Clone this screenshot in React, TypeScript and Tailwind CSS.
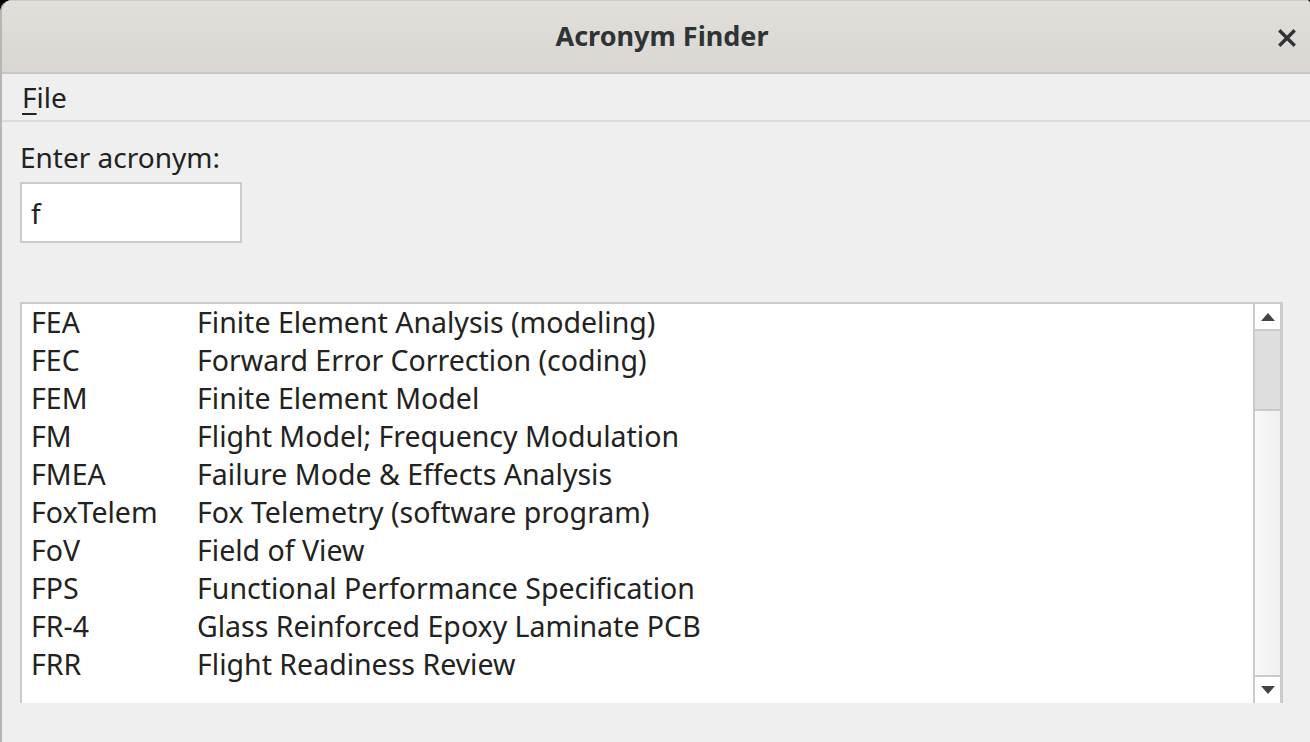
import React from 'react';

const rows: [string, string][] = [
  ['FEA', 'Finite Element Analysis (modeling)'],
  ['FEC', 'Forward Error Correction (coding)'],
  ['FEM', 'Finite Element Model'],
  ['FM', 'Flight Model; Frequency Modulation'],
  ['FMEA', 'Failure Mode & Effects Analysis'],
  ['FoxTelem', 'Fox Telemetry (software program)'],
  ['FoV', 'Field of View'],
  ['FPS', 'Functional Performance Specification'],
  ['FR-4', 'Glass Reinforced Epoxy Laminate PCB'],
  ['FRR', 'Flight Readiness Review'],
];

export default function App() {
  return (
    <div
      className="w-[1310px] h-[742px] bg-black overflow-hidden"
      style={{ fontFamily: '"Noto Sans", "Open Sans", sans-serif' }}
    >
      <div className="h-full flex flex-col rounded-tl-[12px] rounded-tr-[4px] overflow-hidden bg-[#efefef] border-l-2 border-[#b8b6b3]">
        {/* title bar */}
        <div className="relative h-[74px] shrink-0 flex items-center justify-center pl-[12px] bg-gradient-to-b from-[#e2dfdb] to-[#dad6d2] border-t border-[#cfccc8] border-b-2 border-b-[#c9c5c0]">
          <span className="text-[27px] font-bold text-[#2e3436] -mt-[1px]">Acronym Finder</span>
          <svg className="absolute right-[14px] top-[28px]" width="18" height="18" viewBox="0 0 18 18">
            <path d="M2.5 2.5 L15.5 15.5 M15.5 2.5 L2.5 15.5" stroke="#2e3436" strokeWidth="3.4" strokeLinecap="square" />
          </svg>
        </div>

        {/* menu bar */}
        <div className="h-[48px] shrink-0 flex items-center px-[20px] border-b-2 border-[#dcdcdc]">
          <span className="text-[28px] text-[#222] leading-none -mt-[1px]">
            <span className="underline underline-offset-[5px] decoration-[2px]">F</span>ile
          </span>
        </div>

        {/* content */}
        <div className="flex-1 flex flex-col px-[18px] pt-[18px]">
          <div className="text-[28px] text-[#222] leading-[34px]">Enter acronym:</div>
          <div className="mt-[8px] w-[222px] h-[61px] bg-white border-2 border-[#cbcbcb] flex items-center px-[9px]">
            <span className="text-[28px] text-[#222]">f</span>
          </div>

          <div className="mt-[59px] w-[1263px] h-[401px] bg-white border-2 border-b-0 border-[#cbcbcb] flex">
            <div className="flex-1 -mt-[1px] pl-[9px]">
              {rows.map(([a, d]) => (
                <div key={a} className="h-[38px] flex items-center text-[28.5px] text-[#222]">
                  <span className="w-[166px] shrink-0">{a}</span>
                  <span>{d}</span>
                </div>
              ))}
            </div>
            <div className="w-[29px] shrink-0 flex flex-col border-l-2 border-r-2 border-[#cbcbcb] bg-[#f4f4f4] -mr-[1px]">
              <div className="h-[27px] shrink-0 flex items-center justify-center bg-white border-b-2 border-[#cbcbcb]">
                <svg width="14" height="8" viewBox="0 0 14 8">
                  <path d="M7 0 L14 8 L0 8 Z" fill="#444" />
                </svg>
              </div>
              <div className="h-[80px] shrink-0 bg-[#dedede] border-b-2 border-[#cbcbcb]" />
              <div className="flex-1 bg-gradient-to-r from-[#f8f8f8] to-[#f0f0f0]" />
              <div className="h-[28px] shrink-0 flex items-center justify-center bg-white border-t-2 border-[#cbcbcb]">
                <svg width="14" height="8" viewBox="0 0 14 8">
                  <path d="M0 0 L14 0 L7 8 Z" fill="#444" />
                </svg>
              </div>
            </div>
          </div>
        </div>
      </div>
    </div>
  );
}
